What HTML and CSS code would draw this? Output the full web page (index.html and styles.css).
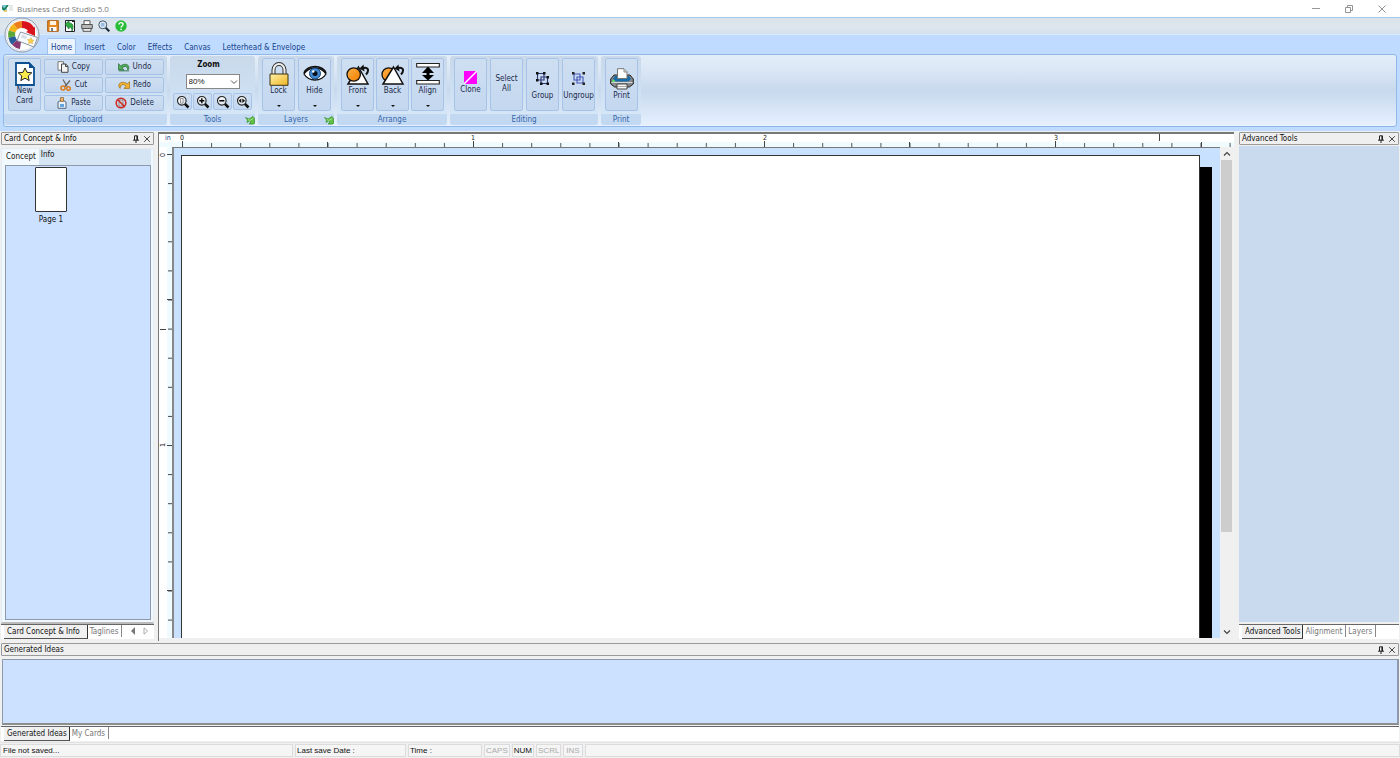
FILE: index.html
```html
<!DOCTYPE html>
<html lang="en">
<head>
<meta charset="utf-8">
<title>Business Card Studio 5.0</title>
<link rel="stylesheet" href="styles.css">
</head>
<body>
<svg class="defs" width="0" height="0" aria-hidden="true">
  <defs>
    <linearGradient id="gold" x1="0" y1="0" x2="1" y2="1"><stop offset="0" stop-color="#fff1a8"/><stop offset="1" stop-color="#efb422"/></linearGradient>
    <linearGradient id="orange" x1="0" y1="0" x2="1" y2="1"><stop offset="0" stop-color="#ffb347"/><stop offset="1" stop-color="#f07c00"/></linearGradient>
    <linearGradient id="lens" x1="0" y1="0" x2="1" y2="1"><stop offset="0" stop-color="#fff"/><stop offset="1" stop-color="#d5dde6"/></linearGradient>
    <pattern id="hticks" x="23" y="0" width="29.1" height="14" patternUnits="userSpaceOnUse"><rect width="1" height="5" y="9" fill="#555"/></pattern>
    <pattern id="vticks" x="0" y="7" width="14" height="29.1" patternUnits="userSpaceOnUse"><rect width="4" height="1" x="9" fill="#444"/></pattern>
    <symbol id="mag" viewBox="0 0 14 14"><path d="M8.7 8.7 12.5 12.5" stroke="#111" stroke-width="2.6"/><circle cx="5.8" cy="5.8" r="4.3" fill="url(#lens)" stroke="#222" stroke-width="1.1"/></symbol>
    <symbol id="pin" viewBox="0 0 8 8"><path d="M2.5 5V.8h3V5M1 5.2h6M4 5v3" fill="none" stroke="#222" stroke-width="1"/><path d="M5 1v4" stroke="#222" stroke-width="1.2"/></symbol>
    <symbol id="cross" viewBox="0 0 8 8"><path d="M1.2 1.2 6.8 6.8M6.8 1.2 1.2 6.8" stroke="#333" stroke-width=".9"/></symbol>
    <symbol id="launch" viewBox="0 0 10 9"><path d="M.5 1.500 4 3 8 .5 9.500 2.500V8H4L6 6 4.500 5 2 6.500 2.500 4Z" fill="#62c044" stroke="#32912a" stroke-width=".7"/><path d="m3 3.500 2 1 3-2" stroke="#b9eb9c" fill="none" stroke-width=".8"/></symbol>
    <symbol id="bentarrow" viewBox="0 0 12 12"><path d="M4 4.500C9.500 2 12 6 8 10.500" fill="none" stroke="#111" stroke-width="2"/><path d="M5.500.5 1.500 4.500 6.500 7.500Z" fill="#111"/></symbol>
  </defs>
</svg>

<header class="titlebar">
  <svg class="title-icon" viewBox="0 0 12 8" aria-hidden="true"><path d="M0 0h5v5H0z" fill="#7cc6d8"/><path d="m0 2 2 3L6 0" stroke="#197b4f" stroke-width="1.600" fill="none"/><path d="M2 6h3" stroke="#e5b94d" stroke-width="1.500"/><path d="M7 1h4M7 3h4M7 5h4" stroke="#cdd3d6"/></svg>
  <h1>Business Card Studio 5.0</h1>
  <div class="window-controls">
    <button aria-label="Minimize"><svg viewBox="0 0 10 10"><path d="M1 4.500h8" stroke="#999"/></svg></button>
    <button aria-label="Restore"><svg viewBox="0 0 10 10"><path d="M1.500 3.500h5v5h-5zM3.500 3V1.500h5v5H7" fill="none" stroke="#888" stroke-width=".9"/></svg></button>
    <button aria-label="Close"><svg viewBox="0 0 10 10"><path d="m1.500 1.500 7 7M8.500 1.500l-7 7" stroke="#888" stroke-width=".9"/></svg></button>
  </div>
</header>

<div class="top">
  <div class="quick">
    <button aria-label="Save"><svg viewBox="0 0 12 12"><path d="M.7.700h10.600v10.600H.7z" fill="#e88b22" stroke="#a85d12"/><path d="M3 1h6v4H3z" fill="#fff3df"/><path d="M2.500 7h7v4h-7z" fill="#fff"/><path d="M4 8h2v3H4z" fill="#777"/></svg></button>
    <button aria-label="Import"><svg viewBox="0 0 12 12"><path d="M1.500.500h9v11h-9z" fill="#fff" stroke="#222"/><path d="M1 4 5 1v2c4 0 5 3 3 8 0-3-1-4-3-4v2Z" fill="#2fae3f" stroke="#12662a" stroke-width=".7"/><path d="M8 1.500h2" stroke="#222"/></svg></button>
    <button aria-label="Print"><svg viewBox="0 0 12 12"><path d="M3 5V.700h6V5" fill="#fff" stroke="#555"/><path d="M.7 4.500h10.600v4H.7z" fill="#b8b8b8" stroke="#555"/><path d="M2 8.500h8v2.800H2z" fill="#eee" stroke="#555"/></svg></button>
    <button aria-label="Preview"><svg viewBox="0 0 12 12"><path d="m7.500 7.500 3.800 3.800" stroke="#1d2a39" stroke-width="2.200"/><circle cx="4.800" cy="4.800" r="4" fill="#dceaf7" stroke="#44566b"/><path d="M3 3h3.500v3.500H3z" fill="#9bbbe0"/></svg></button>
    <button aria-label="Help"><svg viewBox="0 0 12 12"><circle cx="6" cy="6" r="5.700" fill="#27bd36"/><path d="M4 4.600C4 2 8.100 2 8 4.500 8 6 6.100 6 6.100 7.600" fill="none" stroke="#fff" stroke-width="1.400"/><circle cx="6.100" cy="9.300" r=".9" fill="#fff"/></svg></button>
  </div>
  <button class="orb" aria-label="Application menu">
    <svg viewBox="0 0 36 36"><circle cx="18" cy="18" r="17" fill="#f4f7fa" stroke="#8e9bab"/><circle cx="18" cy="18" r="15.500" fill="#fff" stroke="#dbe2ea"/>
      <g fill="none" stroke-width="7"><path d="M18 7.500A10.500 10.500 0 0 1 27.500 13" stroke="#d9141c"/><path d="M11.500 9.500A10.500 10.500 0 0 1 18 7.500" stroke="#ee7d1b"/><path d="M8 14.500A10.500 10.500 0 0 1 11.500 9.500" stroke="#f2b51c"/><path d="M7.800 20A10.500 10.500 0 0 1 8 14.500" stroke="#5ca838"/><path d="M10.500 25.300A10.500 10.500 0 0 1 7.800 20" stroke="#275d9b"/><path d="M16.500 28.500A10.500 10.500 0 0 1 10.500 25.300" stroke="#8a3a73"/></g>
      <path d="m22 15 9-5v9Z" fill="#d9141c"/>
      <path d="m16.500 15 17 5.500-3.500 9.500-17-6.500Z" fill="#f8fbff" stroke="#8a97a5"/><path d="m18 17.500 5 1.700-1 3-5-1.700Z" fill="#d6dde4"/><path d="m27 20.500.8 2.400 2.400.3-2 1.500.4 2.300-2-1.300-2.200 1 .6-2.400-1.500-1.800 2.500-.1Z" fill="#f7d24b" stroke="#d49a1c" stroke-width=".4"/></svg>
  </button>
  <nav class="tabs">
    <a href="#home" class="active">Home</a>
    <a href="#insert">Insert</a>
    <a href="#color">Color</a>
    <a href="#effects">Effects</a>
    <a href="#canvas">Canvas</a>
    <a href="#letterhead">Letterhead &amp; Envelope</a>
  </nav>

  <div class="ribbon">
    <section class="group">
      <div class="group-body">
        <button class="tool new-card"><svg viewBox="0 0 20 24"><path d="M1 1h13l5 5v17H1z" fill="#fff" stroke="#0d4f91" stroke-width="1.800"/><path d="M14 0v6h6" fill="#0d4f91"/><path d="m10 6 2 4.300 4.800.5-3.600 3.200 1 4.600-4.200-2.400-4.200 2.400 1-4.600-3.600-3.200 4.800-.5Z" fill="#ffe94a" stroke="#222"/></svg><span>New<br>Card</span></button>
        <div class="clip-grid">
          <button><svg viewBox="0 0 12 12"><path d="M1 .700h5.500v8.500H1z" fill="#fff" stroke="#777"/><path d="M4.500 3h4.200L11 5.300v6H4.500z" fill="#f3f3f3" stroke="#444"/><path d="M8.500 3v2.500H11" fill="none" stroke="#444"/></svg>Copy</button>
          <button><svg viewBox="0 0 14 12"><path d="M.5 2v7.500H7L4.700 7.200C8 4 11 5 11.500 9.500 15 5 10 0 3 4.700Z" fill="#53aa58" stroke="#246a38" stroke-width=".8"/><path d="M1 10.500h12" stroke="#246a38"/></svg>Undo</button>
          <button><svg viewBox="0 0 12 12"><path d="m3 .500 4 7M10 1.500 5 7.500" stroke="#666" stroke-width="1.300"/><g fill="none" stroke="#db7a18" stroke-width="1.500"><circle cx="3" cy="9" r="2"/><circle cx="8.500" cy="9.500" r="1.800"/></g></svg>Cut</button>
          <button><svg viewBox="0 0 14 12"><path d="M13.500 2v8H7l2.300-2.500C6 4 3 5 2.500 10-2 5 4 0 11 4.700Z" fill="#f1b331" stroke="#9c6a10" stroke-width=".8"/></svg>Redo</button>
          <button><svg viewBox="0 0 12 12"><path d="m2 5 4-2.500L10 5v6.300H2z" fill="#e9f1fa" stroke="#52677d"/><path d="M4.500.500h3v4h-3z" fill="#f0b36a" stroke="#865d2e" stroke-width=".7"/><path d="M4 7h4v3H4z" fill="#65a5df"/></svg>Paste</button>
          <button><svg viewBox="0 0 12 12"><path d="M4 3h4v6H4z" fill="#ddd" stroke="#777" stroke-width=".8"/><circle cx="6" cy="6" r="4.800" fill="none" stroke="#cf2a22" stroke-width="1.600"/><path d="m2.500 2.500 7 7" stroke="#cf2a22" stroke-width="1.600"/></svg>Delete</button>
        </div>
      </div>
      <h2>Clipboard</h2>
    </section>

    <section class="group">
      <div class="group-body zoom-body">
        <label for="zoom">Zoom</label>
        <div class="combo"><select id="zoom"><option>80%</option><option>100%</option></select><svg viewBox="0 0 8 8" aria-hidden="true"><path d="m1 2.500 3 3 3-3" fill="none" stroke="#555"/></svg></div>
        <div class="zoom-buttons">
          <button aria-label="Zoom page"><svg viewBox="0 0 14 14"><use href="#mag"/><path d="M4.500 3.500h2.600v4.600H4.500z" fill="#eee" stroke="#777" stroke-width=".7"/></svg></button>
          <button aria-label="Zoom in"><svg viewBox="0 0 14 14"><use href="#mag"/><path d="M3.300 5.800h5M5.800 3.300v5" stroke="#000" stroke-width="1.400"/></svg></button>
          <button aria-label="Zoom out"><svg viewBox="0 0 14 14"><use href="#mag"/><path d="M3.300 5.800h5" stroke="#000" stroke-width="1.400"/></svg></button>
          <button aria-label="Zoom to width"><svg viewBox="0 0 14 14"><use href="#mag"/><path d="M5.300 3.500v4.600L2.500 5.800ZM6.300 3.500v4.600l2.800-2.300Z" fill="#111"/></svg></button>
        </div>
      </div>
      <h2>Tools</h2>
      <button class="launcher" aria-label="Tools options"><svg viewBox="0 0 10 9"><use href="#launch"/></svg></button>
    </section>

    <section class="group">
      <div class="group-body">
        <button class="tool drop"><svg viewBox="0 0 24 24"><path d="M6.500 12V8a5.500 6 0 0 1 11 0v4" fill="none" stroke="#333" stroke-width="4"/><path d="M6.500 12V8a5.500 6 0 0 1 11 0v4" fill="none" stroke="#eee" stroke-width="2"/><path d="M3 12h18v11.300H3z" fill="url(#gold)" stroke="#3b321a"/></svg><span>Lock</span></button>
        <button class="tool drop"><svg viewBox="0 0 24 24"><path d="M1 12C6 4 18 4 23 12 18 20 6 20 1 12Z" fill="#fff" stroke="#111" stroke-width="1.300"/><circle cx="12" cy="11.500" r="5.500" fill="#4389cf" stroke="#17447e"/><circle cx="12" cy="11.500" r="2.500" fill="#06101d"/><circle cx="10.300" cy="9.500" r="1.200" fill="#fff"/><path d="M1 11C5 2.500 19 2.500 23 11" fill="none" stroke="#111" stroke-width="1.600"/></svg><span>Hide</span></button>
      </div>
      <h2>Layers</h2>
      <button class="launcher" aria-label="Layers options"><svg viewBox="0 0 10 9"><use href="#launch"/></svg></button>
    </section>

    <section class="group">
      <div class="group-body arrange-body">
        <button class="tool drop"><svg viewBox="0 0 24 24"><path d="m12.500 5 9.500 17H2Z" fill="#fff" stroke="#111" stroke-width="1.500"/><circle cx="7.700" cy="12.500" r="6.700" fill="url(#orange)" stroke="#111" stroke-width="1.300"/><use href="#bentarrow" x="12" y="2" width="12" height="12"/></svg><span>Front</span></button>
        <button class="tool drop"><svg viewBox="0 0 24 24"><circle cx="7.700" cy="12.500" r="6.700" fill="url(#orange)" stroke="#111" stroke-width="1.300"/><path d="m12.500 5 9.500 17H2Z" fill="#fff" stroke="#111" stroke-width="1.500"/><use href="#bentarrow" x="12" y="2" width="12" height="12"/></svg><span>Back</span></button>
        <button class="tool drop"><svg viewBox="0 0 24 24"><path d="M.7 1.500h22.600v3.500H.7zM.7 18.500h22.600V22H.7z" fill="#fff" stroke="#222" stroke-width="1.100"/><path d="m12 4.500 6 6.500H6zM12 18.500 6 13h12zM10.500 9h3v6h-3z" fill="#000"/></svg><span>Align</span></button>
      </div>
      <h2>Arrange</h2>
    </section>

    <section class="group">
      <div class="group-body">
        <button class="tool clone"><svg viewBox="0 0 12 12"><path d="M0 0h12v12H0z" fill="#f0f"/><path d="M0 12 12 0" stroke="#fff" stroke-width="1.300"/></svg><span>Clone</span></button>
        <button class="tool select-all"><span>Select<br>All</span></button>
        <button class="tool arrange-group"><svg viewBox="0 0 13 13"><path d="M1.500 1.500h6.500v6.500H1.500zM5 5h6.500v6.500H5z" fill="none" stroke="#2a3578" stroke-width="1.100"/><path d="M0 0h2.500v2.500H0zM7 0h2.500v2.500H7zM0 7h2.500v2.500H0zM10.500 4H13v2.500h-2.500zM10.500 10.500H13V13h-2.500zM4 10.500h2.500V13H4z" fill="#111"/></svg><span>Group</span></button>
        <button class="tool arrange-group"><svg viewBox="0 0 13 13"><path d="M2 2h6v6H2zM5 5h6v6H5z" fill="none" stroke="#4454b8" stroke-width="1.100"/><path d="M0 0h2.500v2.500H0zM10.500 0H13v2.500h-2.500zM0 10.500h2.500V13H0zM10.500 10.500H13V13h-2.500z" fill="#222"/></svg><span>Ungroup</span></button>
      </div>
      <h2>Editing</h2>
    </section>

    <section class="group">
      <div class="group-body">
        <button class="tool print"><svg viewBox="0 0 24 22"><path d="M4 7h16l3.300 4v5l-4 3H4.700l-4-3v-5Z" fill="#85898d" stroke="#222"/><path d="M5 8h14l2 3-3 2.500H6L3 11Z" fill="#176ba9"/><path d="M7.500 10.500V.7h6.500l3 3v6.800Z" fill="#fff" stroke="#777"/><path d="M14 1v3h3" fill="#ddd" stroke="#888"/><path d="M1.500 14.500h21" stroke="#d5d8da" stroke-width="1.200"/><path d="M7 16h10v5H7z" fill="#f5f5f5" stroke="#444"/><path d="M8 18.500h8" stroke="#aaa"/><circle cx="3.500" cy="13" r="1.200" fill="#50e75a"/></svg><span>Print</span></button>
      </div>
      <h2>Print</h2>
    </section>
  </div>
</div>

<main class="workspace">
  <aside class="dock left-dock">
    <div class="caption"><h2>Card Concept &amp; Info</h2><button aria-label="Pin card panel"><svg viewBox="0 0 8 8"><use href="#pin"/></svg></button><button aria-label="Close card panel"><svg viewBox="0 0 8 8"><use href="#cross"/></svg></button></div>
    <div class="concept">
      <div class="concept-tabs"><a href="#concept" class="active">Concept</a><a href="#info">Info</a></div>
      <div class="pages"><button class="page-item"><span class="thumb"></span>Page 1</button></div>
    </div>
    <div class="dock-tabs"><a href="#card" class="active">Card Concept &amp; Info</a><a href="#taglines">Taglines</a><button aria-label="Previous tabs"><svg viewBox="0 0 8 8"><path d="M6 0v8L2 4Z" fill="#777"/></svg></button><button aria-label="Next tabs"><svg viewBox="0 0 8 8"><path d="M2 .800v6.400L5.500 4Z" fill="#fff" stroke="#999" stroke-width=".8"/></svg></button></div>
  </aside>

  <section class="editor" aria-label="Card editor">
    <svg class="hruler" aria-hidden="true"><rect y="8" width="100%" height="6" fill="#effbff"/><rect x="23" width="100%" height="14" fill="url(#hticks)"/>
      <path d="M23.500 7v6M314.500 7v6M605.500 7v6M896.500 7v6M168.500 8v5M459.500 8v5M750.500 8v5M1042.500 8v5M1000.500 0v7" stroke="#444"/>
      <g class="ruler-text"><text x="6" y="6" class="unit">in</text><text x="21" y="6">0</text><text x="312" y="6">1</text><text x="604" y="6">2</text><text x="895" y="6">3</text></g></svg>
    <div class="stage">
      <svg class="vruler" aria-hidden="true"><rect x="8" width="6" height="100%" fill="#effbff"/><rect y="7" width="14" height="100%" fill="url(#vticks)"/><path d="M8 7.500h6M8 152.500h5M8 298.500h6M8 443.500h5M1 182.500h6" stroke="#444"/>
        <g class="ruler-text"><text transform="translate(6 10) rotate(-90)">0</text><text transform="translate(6 300) rotate(-90)">1</text></g></svg>
      <div class="canvas"><div class="card-page"></div></div>
      <div class="scrollbar"><button aria-label="Scroll up"><svg viewBox="0 0 8 8"><path d="m1 5.500 3-3 3 3" fill="none" stroke="#444" stroke-width="1.200"/></svg></button><div class="track"><div class="thumb-bar"></div></div><button aria-label="Scroll down"><svg viewBox="0 0 8 8"><path d="m1 2.500 3 3 3-3" fill="none" stroke="#444" stroke-width="1.200"/></svg></button></div>
    </div>
  </section>

  <aside class="dock right-dock">
    <div class="caption"><h2>Advanced Tools</h2><button aria-label="Pin tools panel"><svg viewBox="0 0 8 8"><use href="#pin"/></svg></button><button aria-label="Close tools panel"><svg viewBox="0 0 8 8"><use href="#cross"/></svg></button></div>
    <div class="tools-area"></div>
    <div class="dock-tabs"><a href="#advanced" class="active">Advanced Tools</a><a href="#alignment">Alignment</a><a href="#layers">Layers</a></div>
  </aside>
</main>

<section class="ideas">
  <div class="caption"><h2>Generated Ideas</h2><button aria-label="Pin ideas panel"><svg viewBox="0 0 8 8"><use href="#pin"/></svg></button><button aria-label="Close ideas panel"><svg viewBox="0 0 8 8"><use href="#cross"/></svg></button></div>
  <div class="ideas-area"></div>
  <div class="dock-tabs"><a href="#ideas" class="active">Generated Ideas</a><a href="#mycards">My Cards</a></div>
</section>

<footer class="status"><span class="file">File not saved...</span><span class="date">Last save Date :</span><span class="time">Time :</span><span class="off">CAPS</span><span>NUM</span><span class="off">SCRL</span><span class="off ins">INS</span><span class="rest"></span></footer>
</body>
</html>
```

FILE: styles.css
```css
* { box-sizing: border-box; }
body {
  margin: 0;
  height: 100vh;
  display: flex;
  flex-direction: column;
  overflow: hidden;
  background: #f0f0f0;
  color: #111;
  font: 8px/10px "DejaVu Sans Condensed", "DejaVu Sans", sans-serif;
}
button { border: 0; padding: 0; background: none; font: inherit; color: inherit; }
a { color: inherit; text-decoration: none; }
h1, h2 { margin: 0; font: inherit; }
svg { display: block; flex: none; }
.defs { position: absolute; }

.titlebar { height: 17px; display: flex; align-items: center; gap: 3px; padding-left: 2px; background: #fff; color: #777; font-family: "Open Sans", sans-serif; }
.title-icon { width: 12px; height: 8px; }
.window-controls { margin-left: auto; display: flex; padding-right: 13px; gap: 23px; }
.window-controls svg { width: 10px; height: 10px; }

.top { position: relative; background: #bfdbff; padding-bottom: 4px; }
.quick { height: 18px; display: flex; align-items: center; gap: 5px; padding-left: 47px; border-top: 1px solid #a9c8ee; border-bottom: 1px solid #d8e9fc; background: linear-gradient(#d9e2ea, #dfe7ed 50%, #d3e1ee); }
.quick svg { width: 12px; height: 12px; }
.orb { position: absolute; left: 4px; top: 0; }
.orb svg { width: 36px; height: 36px; }
.tabs { height: 19px; display: flex; align-items: flex-end; gap: 4px; padding-left: 47px; color: #15428b; }
.tabs a { padding: 4px 3px 2px; height: 16px; border: 1px solid transparent; border-bottom: 0; }
.tabs .active { background: #eaf3fe; border-color: #9fc2ee; border-radius: 2px 2px 0 0; }

.ribbon { margin: 0 3px; height: 73px; padding-top: 1px; display: flex; gap: 3px; border: 1px solid #8fb7e8; border-radius: 3px; background: linear-gradient(#e4eefb, #dbe7f5 20%, #c8d9ed 50%, #d3e2f4 70%, #e7f1ff); }
.group { position: relative; height: 69px; display: flex; flex-direction: column; border-radius: 3px; overflow: hidden; background: linear-gradient(#c9d9ea, #cddff2 50%, #d9e9f8); }
.group h2 { height: 11px; line-height: 12px; background: #c2d9f1; color: #3565ac; text-align: center; }
.group-body { flex: 1; display: flex; gap: 3px; padding: 2px 3px 0 4px; }
.group button:not(.launcher) { border: 1px solid #a7c4e8; border-radius: 2px; background: linear-gradient(#cfdff2, #c3d7ef); color: #1b2a4a; }
.tool { position: relative; width: 33px; height: 53px; display: flex; flex-direction: column; align-items: center; line-height: 10px; white-space: nowrap; }
.group .tool { padding-top: 3px; }
.arrange-body { gap: 2px; }
.arrange-body .tool { width: 33px; }
.drop svg { width: 24px; height: 24px; }
.drop::after { content: ""; position: absolute; bottom: 3px; border: 2px solid transparent; border-top-color: #111; border-bottom: 0; }
.new-card svg { width: 20px; height: 24px; }
.clip-grid { display: grid; grid-template-columns: 59px 59px; grid-auto-rows: 16px; gap: 2px; padding-top: 1px; }
.clip-grid button { display: flex; align-items: center; justify-content: center; gap: 3px; }
.clip-grid svg { width: 12px; height: 12px; }
.zoom-body { flex-direction: column; align-items: center; gap: 4px; padding: 4px 3px 0; }
.zoom-body label { padding-right: 8px; font-weight: bold; color: #111; }
.combo { position: relative; width: 54px; }
.combo select { display: block; appearance: none; width: 100%; height: 15px; padding: 0 2px; border: 1px solid #888; border-radius: 0; background: #fff; color: #222; font: 8px "Liberation Sans", sans-serif; }
.combo svg { position: absolute; right: 2px; top: 4px; width: 8px; height: 8px; pointer-events: none; }
.zoom-buttons { display: flex; gap: 1px; }
.zoom-buttons button { width: 19px; height: 17px; display: grid; place-items: center; }
.zoom-buttons svg { width: 14px; height: 14px; }
.launcher { position: absolute; right: 0; bottom: 0; }
.launcher svg { width: 10px; height: 9px; }
.group .clone { padding-top: 12px; gap: 1px; }
.clone svg { width: 13px; height: 13px; }
.group .select-all { padding-top: 15px; }
.group .arrange-group { padding-top: 13px; gap: 6px; }
.arrange-group svg { width: 13px; height: 13px; }
.group .print { padding-top: 9px; gap: 1px; }
.print svg { width: 24px; height: 22px; }

.workspace { flex: 1; min-height: 0; display: grid; grid-template-columns: 154px minmax(0, 1fr) 161px; column-gap: 4px; padding-right: 1px; }
.dock { min-width: 0; display: flex; flex-direction: column; padding: 1px 0 2px 1px; }
.caption { height: 13px; flex: none; display: flex; align-items: center; gap: 3px; padding: 0 2px; border: 1px solid #999; border-radius: 1px; background: #efefef; }
.caption h2 { flex: 1; }
.caption svg { width: 8px; height: 8px; }
.concept { flex: 1; display: flex; flex-direction: column; margin-top: 3px; padding: 0 2px 2px 3px; background: #f0f8ff; border: 1px solid #e3ecf3; border-bottom: 2px solid #bbb; }
.concept-tabs { display: flex; height: 16px; background: #d5e5f3; }
.concept-tabs a { padding: 1px 2px; }
.concept-tabs .active { padding: 3px 3px 0 1px; background: #f3faff; }
.pages { flex: 1; padding: 1px 29px; background: #cce0ff; border: 1px solid #8e99ab; }
.page-item { display: flex; flex-direction: column; align-items: center; gap: 3px; }
.thumb { width: 32px; height: 45px; background: #fff; border: 1px solid #333; border-radius: 1px; }
.dock-tabs { height: 15px; display: flex; align-items: flex-start; gap: 1px; padding-left: 3px; background: #fff; border-top: 1px solid #666; color: #777; white-space: nowrap; }
.dock-tabs a { padding: 2px 3px 1px 1px; height: 12px; border-right: 1px solid #888; }
.dock-tabs .active { height: 14px; padding: 2px 2px 1px 3px; background: #f0f0f0; color: #111; border-right: 1px solid #333; border-bottom: 1px solid #555; }
.dock-tabs svg { width: 8px; height: 8px; margin: 2px 1px; }
.left-dock .dock-tabs .active { padding-right: 7px; }
.left-dock .dock-tabs a + button { margin: 0 2px 0 5px; }

.editor { min-width: 0; display: flex; flex-direction: column; margin-top: 1px; border-top: 2px solid #777; border-left: 1px solid #777; }
.hruler { width: 100%; height: 13px; background: #fff; }
.ruler-text { font: 7px "DejaVu Sans Condensed", sans-serif; fill: #222; }
.unit { fill: #15428b; }
.stage { flex: 1; min-height: 0; display: flex; padding-bottom: 3px; }
.vruler { width: 13px; height: 100%; background: #fff; }
.canvas { flex: 1; min-width: 0; display: flex; padding: 7px 20px 0 7px; overflow: hidden; background: #c8e1ff; border-left: 2px solid #888; border-top: 1px solid #777; }
.card-page { flex: 1; background: #fff; border: 1px solid #333; border-bottom: 0; box-shadow: 12px 12px 0 #000; }
.scrollbar { width: 14px; display: flex; flex-direction: column; padding: 0 2px 0 1px; background: #f0f0f0; }
.scrollbar button { height: 13px; display: grid; place-items: center; }
.scrollbar svg { width: 8px; height: 8px; }
.track { flex: 1; }
.thumb-bar { height: 80%; background: #cdcdcd; }
.tools-area { flex: 1; margin-top: 1px; background: #c9d9ee; border-bottom: 2px solid #f0f0f0; }

.ideas { display: flex; flex-direction: column; padding: 2px 1px 1px 1px; }
.ideas-area { height: 66px; margin: 3px 0 1px 1px; background: #cce0ff; border: 1px solid #8e99ab; border-right-width: 2px; border-bottom: 2px solid #8e8e8e; }
.status { height: 16px; display: flex; align-items: center; gap: 2px; padding: 0 0 1px; font: 8px/11px "Liberation Sans", sans-serif; border-top: 1px solid #e3e3e3; }
.status span { height: 13px; padding: 0 1px; border: 1px solid #dcdcdc; background: #f5f5f5; }
.status .file { width: 293px; padding-left: 2px; }
.status .date { width: 111px; }
.status .time { width: 74px; }
.status .off { color: #aaa; }
.status .ins { padding: 0 2px; }
.status .rest { flex: 1; }
```
